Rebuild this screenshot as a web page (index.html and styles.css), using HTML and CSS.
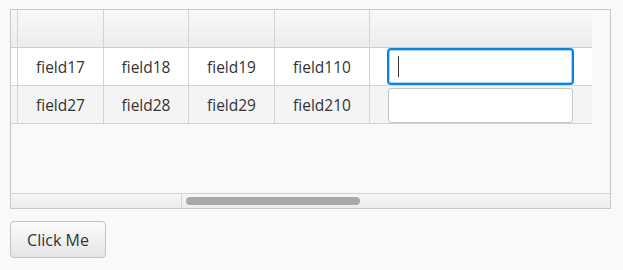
FILE: index.html
```html
<!DOCTYPE html>
<html lang="en">
<head>
  <meta charset="UTF-8">
  <title>Table Demo</title>
  <link rel="stylesheet" href="styles.css">
</head>
<body>
  <div class="wrap">
    <!-- table view -->
    <div class="table">
      <div class="viewport">
        <div class="row header">
          <div class="cell c0"></div>
          <div class="cell c1"></div>
          <div class="cell c2"></div>
          <div class="cell c3"></div>
          <div class="cell c4"></div>
          <div class="cell c5"></div>
        </div>
        <div class="row">
          <div class="cell c0"></div>
          <div class="cell c1">field17</div>
          <div class="cell c2">field18</div>
          <div class="cell c3">field19</div>
          <div class="cell c4">field110</div>
          <div class="cell c5"><div class="field focused"><span class="caret"></span></div></div>
        </div>
        <div class="row odd">
          <div class="cell c0"></div>
          <div class="cell c1">field27</div>
          <div class="cell c2">field28</div>
          <div class="cell c3">field29</div>
          <div class="cell c4">field210</div>
          <div class="cell c5"><div class="field"></div></div>
        </div>
      </div>
      <div class="hscroll">
        <div class="track-left"></div>
        <div class="track-right"><div class="thumb"></div></div>
      </div>
    </div>

    <button class="btn">Click Me</button>
  </div>
</body>
</html>
```

FILE: styles.css
```css
body {
  margin: 0;
  background: #f9f9f9;
  font-family: 'Open Sans', sans-serif;
  color: #333;
}

.wrap {
  padding: 9px 10px;
}

.table {
  width: 599px;
  height: 198px;
  border: 1px solid #c8c8c8;
  background: #f9f9f9;
  display: flex;
  flex-direction: column;
}

.viewport {
  flex: 1;
  overflow: hidden;
}

.row {
  display: flex;
  width: 581px;
  height: 37px;
  border-bottom: 1px solid #d4d4d4;
  background: #fff;
}

.row.odd {
  background: #f4f4f4;
}

.header {
  background: linear-gradient(#f9f9f9, #ececec);
  border-bottom-color: #cfcfcf;
}

.cell {
  box-sizing: border-box;
  height: 100%;
  border-right: 1px solid #d4d4d4;
  display: flex;
  align-items: center;
  justify-content: center;
  font-size: 15.5px;
}

.c0 { width: 7px; }
.c1 { width: 86px; }
.c2 { width: 85px; }
.c3 { width: 86px; }
.c4 { width: 95px; }
.c5 {
  width: 222px;
  border-right: none;
  justify-content: flex-start;
  padding-left: 17px;
}

.field {
  box-sizing: border-box;
  width: 185px;
  height: 35px;
  margin: 1px 0 0 1px;
  border: 1px solid #c4c4c4;
  border-radius: 3px;
  background: #fff;
  display: flex;
  align-items: center;
}

.field.focused {
  width: 187px;
  height: 37px;
  margin: 0;
  border: 2px solid #0a84e3;
  border-radius: 4px;
  box-shadow: inset 0 0 0 1px #a9d2f3;
}

.caret {
  display: block;
  width: 1px;
  height: 21px;
  margin-left: 9px;
  background: #333;
}

.hscroll {
  height: 14px;
  border-top: 1px solid #d4d4d4;
  display: flex;
  background: linear-gradient(#f6f6f6, #ececec);
}

.track-left {
  width: 170px;
  border-right: 1px solid #d4d4d4;
}

.track-right {
  flex: 1;
  padding: 3px 0 0 4px;
}

.thumb {
  width: 174px;
  height: 8px;
  border-radius: 4px;
  background: #a9a9a9;
}

.btn {
  margin-top: 12px;
  width: 96px;
  height: 37px;
  border: 1px solid #c2c2c2;
  border-radius: 4px;
  background: linear-gradient(#fbfbfb, #e5e5e5);
  font-family: 'Open Sans', sans-serif;
  font-size: 16px;
  color: #333;
  padding: 0;
}
```
